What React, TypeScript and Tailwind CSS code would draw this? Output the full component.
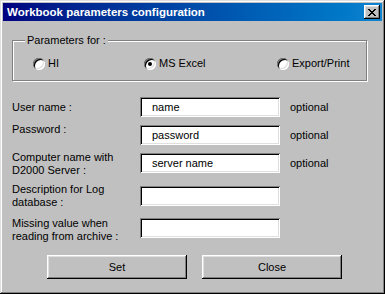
import React from "react";

const raised =
  "shadow-[inset_-1px_-1px_0_#000,inset_1px_1px_0_#fff,inset_-2px_-2px_0_#808080,inset_2px_2px_0_#dfdfdf]";
const sunken =
  "shadow-[inset_1px_1px_0_#808080,inset_-1px_-1px_0_#fff,inset_2px_2px_0_#000,inset_-2px_-2px_0_#dfdfdf]";

const closeGlyph = [
  "XX....XX",
  ".XX..XX.",
  "..XXXX..",
  "...XX...",
  "..XXXX..",
  ".XX..XX.",
  "XX....XX",
];

function CloseIcon() {
  return (
    <svg width="8" height="7" viewBox="0 0 8 7" shapeRendering="crispEdges">
      {closeGlyph.map((row, y) =>
        row.split("").map((c, x) =>
          c === "X" ? <rect key={`${x}-${y}`} x={x} y={y} width="1" height="1" fill="#000" /> : null
        )
      )}
    </svg>
  );
}

function Radio({ label, checked }: { label: string; checked?: boolean }) {
  return (
    <div className="flex items-center gap-[3px]">
      <div
        className={`w-[12px] h-[12px] rounded-full bg-white flex items-center justify-center shadow-[inset_1px_1px_0_#808080,inset_-1px_-1px_0_#fff,inset_2px_2px_0_#000,inset_-2px_-2px_0_#dfdfdf]`}
      >
        {checked && <div className="w-[4px] h-[4px] rounded-full bg-black" />}
      </div>
      <span>{label}</span>
    </div>
  );
}

interface Row {
  label: string[];
  value: string;
  optional: boolean;
  labelClass: string;
  rowClass: string;
}

const rows: Row[] = [
  { label: ["User name :"], value: "name", optional: true, labelClass: "mt-[4px]", rowClass: "mt-[16px]" },
  { label: ["Password :"], value: "password", optional: true, labelClass: "-mt-[2px]", rowClass: "mt-[8px]" },
  {
    label: ["Computer name with", "D2000 Server :"],
    value: "server name",
    optional: true,
    labelClass: "-mt-[2px]",
    rowClass: "mt-[8px]",
  },
  {
    label: ["Description for Log", "database :"],
    value: "",
    optional: false,
    labelClass: "-mt-[3px]",
    rowClass: "mt-[13px]",
  },
  {
    label: ["Missing value when", "reading from archive :"],
    value: "",
    optional: false,
    labelClass: "-mt-[1px]",
    rowClass: "mt-[12px]",
  },
];

export default function App() {
  return (
    <div
      className={`w-[385px] h-[294px] bg-[#c0c0c0] p-[3px] text-[11px] leading-[13px] text-black shadow-[inset_-1px_-1px_0_#000,inset_1px_1px_0_#dfdfdf,inset_-2px_-2px_0_#808080,inset_2px_2px_0_#fff]`}
      style={{ fontFamily: '"Liberation Sans", Arial, sans-serif' }}
    >
      {/* title bar */}
      <div className="h-[18px] flex items-center justify-between pl-[4px] pr-[2px] bg-gradient-to-r from-[#000080] to-[#1084d0]">
        <span className="text-white font-bold text-[11.5px]">Workbook parameters configuration</span>
        <div className={`w-[16px] h-[14px] bg-[#c0c0c0] flex items-center justify-center ${raised}`}>
          <CloseIcon />
        </div>
      </div>

      <div className="px-[9px]">
        {/* group box */}
        <div className="relative mt-[19px] w-[355px] h-[41px] border border-[#808080] shadow-[1px_1px_0_#fff,inset_1px_1px_0_#fff]">
          <span className="absolute -top-[7px] left-[12px] px-[2px] bg-[#c0c0c0]">Parameters for :</span>
          <div className="flex items-center pt-[16px] pl-[20px]">
            <div className="w-[111px]">
              <Radio label="HI" />
            </div>
            <div className="w-[133px]">
              <Radio label="MS Excel" checked />
            </div>
            <Radio label="Export/Print" />
          </div>
        </div>

        {/* fields */}
        {rows.map((r) => (
          <div key={r.value + r.label[0]} className={`flex items-start h-[20px] ${r.rowClass}`}>
            <div className={`w-[128px] shrink-0 ${r.labelClass}`}>
              {r.label.map((l) => (
                <div key={l}>{l}</div>
              ))}
            </div>
            <div className={`w-[140px] h-[20px] bg-white pl-[12px] flex items-center ${sunken}`}>{r.value}</div>
            {r.optional && <span className="ml-[10px] self-center">optional</span>}
          </div>
        ))}

        {/* buttons */}
        <div className="flex gap-[15px] mt-[17px] ml-[35px]">
          <button className={`w-[140px] h-[24px] bg-[#c0c0c0] ${raised}`}>Set</button>
          <button className={`w-[140px] h-[24px] bg-[#c0c0c0] ${raised}`}>Close</button>
        </div>
      </div>
    </div>
  );
}
